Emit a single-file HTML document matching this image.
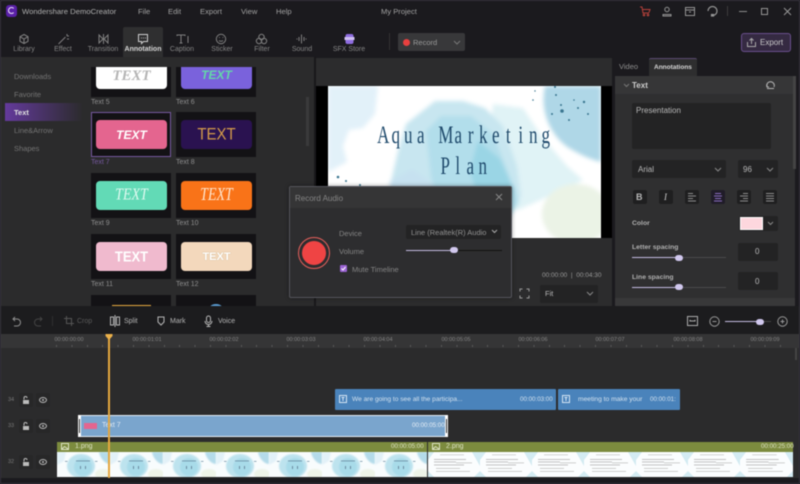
<!DOCTYPE html>
<html><head><meta charset="utf-8">
<style>
*{box-sizing:border-box;margin:0;padding:0}
html,body{width:800px;height:484px;overflow:hidden;background:#1b1a1e}
body{font-family:"Liberation Sans",sans-serif;position:relative}
#r{position:absolute;left:0;top:0;width:800px;height:484px;filter:blur(.45px);overflow:hidden}
.a,.t,svg.i{position:absolute}
.t{white-space:nowrap;line-height:12px;height:12px}
.m{font-size:7.6px;color:#a2a2a2}
.tb{font-size:7px;color:#858585}
.tb{transform:translateX(-50%)}
.card{position:absolute;width:80px;height:45px;background:#131215}
.in{position:absolute;left:5px;top:8px;width:71px;height:29px;border-radius:4px}
.tx{position:absolute;left:0;right:0;top:50%;height:20px;margin-top:-10px;line-height:20px;text-align:center;font-size:19px}
.lb{font-size:7px;color:#8e8e8e}
.sl{font-size:7.5px;color:#747474}
.ru{font-size:5.5px;color:#858585;transform:translateX(-50%)}
.fb{background:#232324;border-radius:2px}
.sm{position:absolute;width:14px;height:14px;background:#1f1f20;border-radius:2px;top:190px}
.track{position:absolute;width:14px;height:14px;background:#272728;border-radius:2px}
.thumb{position:absolute;top:452px;height:25px;overflow:hidden;background:#fff}
</style></head><body><div id="r">

<svg width="0" height="0" style="position:absolute"><defs>
<filter id="b1" x="-10%" y="-10%" width="120%" height="120%"><feGaussianBlur stdDeviation="2.200"/></filter>
<filter id="b2" x="-20%" y="-20%" width="140%" height="140%"><feGaussianBlur stdDeviation=".8"/></filter>
<symbol id="s1" viewBox="0 0 53 25" preserveAspectRatio="none">
<rect width="53" height="25" fill="#f8fcfd"/>
<g filter="url(#b2)">
<path d="M0 0h9L7 9 0 13z" fill="#e2f1f8"/>
<ellipse cx="24" cy="14" rx="14" ry="12" fill="#bde3ee"/><ellipse cx="26" cy="15" rx="9" ry="9" fill="#a8dbe9"/>
<path d="M42 0h11v12c-5 0-10-6-11-12z" fill="#b4dbea"/><ellipse cx="46" cy="22" rx="8" ry="5" fill="#eef4e8"/>
</g>
<g fill="#6a8aa0"><rect x="8" y="9" width="2.500" height=".7"/><rect x="19" y="8.500" width="14" height=".8"/><rect x="23" y="14" width="1" height="3"/><rect x="28" y="14" width="1" height="3"/><rect x="38" y="9" width="2.500" height=".7"/></g>
</symbol>
<symbol id="s2" viewBox="0 0 52 25" preserveAspectRatio="none">
<rect width="52" height="25" fill="#fbfdfe"/>
<path d="M44 0h8v14zM0 0h6L0 8zM0 25h6l-6-6zM52 25h-6l6-6z" fill="#d3ebf2"/>
<g fill="#bcbcbc"><rect x="6" y="7" width="32" height=".9"/><rect x="6" y="9.500" width="22" height=".9"/><rect x="28" y="10.500" width="16" height=".7"/><rect x="6" y="12.500" width="30" height=".9"/><rect x="8" y="16" width="24" height=".7"/><rect x="12" y="2.500" width="24" height=".6"/><rect x="8" y="19" width="34" height=".7"/></g>
</symbol>
</defs></svg>

<!-- title -->
<div class="a" style="left:0;top:0;width:800px;height:1px;background:#37343e"></div>
<div class="a" style="left:6px;top:5px;width:11px;height:12px;border-radius:3px;background:#5a20a8"></div>
<div class="a" style="left:8px;top:7px;width:7px;height:7px;border-radius:50%;border:1.500px solid #f0e8fb;border-right-color:transparent"></div>
<div class="t" style="left:22px;top:6px;font-size:7.700px;color:#aeaeae">Wondershare DemoCreator</div>
<div class="t m" style="left:138px;top:6px">File</div>
<div class="t m" style="left:168px;top:6px">Edit</div>
<div class="t m" style="left:200px;top:6px">Export</div>
<div class="t m" style="left:241px;top:6px">View</div>
<div class="t m" style="left:276px;top:6px">Help</div>
<div class="t m" style="left:381px;top:6px">My Project</div>
<svg class="i" style="left:639px;top:6px" width="12" height="11" fill="none" stroke="#b8423b" stroke-width="1"><path d="M1 1h2l1 6h6M4 3.500h7l-1 3"/><circle cx="5" cy="9" r=".8"/><circle cx="9" cy="9" r=".8"/></svg>
<svg class="i" style="left:661px;top:6px" width="12" height="11" fill="none" stroke="#969696" stroke-width="1"><circle cx="6" cy="3.500" r="2.200"/><path d="M2 10V8.500h8V10z"/></svg>
<svg class="i" style="left:684px;top:6px" width="12" height="11" fill="none" stroke="#969696" stroke-width="1"><rect x="1.500" y="1.500" width="9" height="8"/><path d="M1.500 4h9M5 6h2"/></svg>
<svg class="i" style="left:706px;top:5px" width="13" height="12" fill="none" stroke="#969696" stroke-width="1.200"><path d="M2 6a4.500 4.500 0 0 1 9 0M11 6a4.500 4.500 0 0 1-4 4.500"/><rect x="5.500" y="9.500" width="2" height="1.500" fill="#969696"/></svg>
<div class="a" style="left:727px;top:6px;width:1px;height:10px;background:#3d3d3d"></div>
<div class="a" style="left:739px;top:11px;width:8px;height:1px;background:#8c8c8c"></div>
<div class="a" style="left:761px;top:8px;width:7px;height:7px;border:1px solid #969696"></div>
<svg class="i" style="left:783px;top:7px" width="9" height="9" stroke="#969696"><path d="M1 1l7 7M8 1l-7 7"/></svg>

<!-- toolbar -->
<div class="a" style="left:123px;top:27px;width:40px;height:31px;background:#2f2f30;border-radius:2px 2px 0 0"></div>
<svg class="i" style="left:18px;top:33px" width="12" height="12" fill="none" stroke="#808080"><path d="M6 1.500l4 2.200v4.600l-4 2.200-4-2.200V3.700zM2 3.700l4 2.300 4-2.300M6 6v4.500"/></svg>
<svg class="i" style="left:57px;top:33px" width="13" height="12" fill="none" stroke="#808080"><path d="M1.500 11l7-7M10 1v2M12 3h-2M10 6h2"/></svg>
<svg class="i" style="left:97px;top:33px" width="12" height="12" fill="none" stroke="#808080"><path d="M2 2v8l4-4zM11 2v8L7 6zM6.500 1v10"/></svg>
<svg class="i" style="left:137px;top:33px" width="12" height="12" fill="none" stroke="#cfcfcf"><path d="M1.500 1.500h9v7h-4l-2 2v-2h-3z"/><path d="M4 5h.8M6 5h.8M8 5h.8"/></svg>
<svg class="i" style="left:176px;top:33px" width="14" height="12" fill="none" stroke="#808080"><path d="M1 3V2h8v1M5 2v8M3.500 10h3M12 3v7"/></svg>
<svg class="i" style="left:215px;top:33px" width="12" height="12" fill="none" stroke="#808080"><circle cx="6" cy="6" r="4.700"/><path d="M4 7.500c1 1 3 1 4 0M4 4.500h.8M7.500 4.500h.8"/></svg>
<svg class="i" style="left:255px;top:33px" width="13" height="12" fill="none" stroke="#808080"><circle cx="6.500" cy="4" r="2.700"/><circle cx="4" cy="8" r="2.700"/><circle cx="9" cy="8" r="2.700"/></svg>
<svg class="i" style="left:295px;top:33px" width="13" height="12" fill="none" stroke="#808080"><path d="M6.500 1.500v9M4 4v4M9 4v4M1.500 6h1M10.500 6h1"/></svg>
<svg class="i" style="left:344px;top:33px" width="11" height="12"><rect x="1.500" y="1" width="8" height="10" rx="2" fill="#8f6de0"/><rect x=".5" y="4" width="10" height="3" fill="#cfc0f2"/></svg>
<div class="t tb" style="left:24px;top:44px">Library</div>
<div class="t tb" style="left:63px;top:44px">Effect</div>
<div class="t tb" style="left:103px;top:44px">Transition</div>
<div class="t tb" style="left:143px;top:44px;color:#d6d6d6;font-weight:bold">Annotation</div>
<div class="t tb" style="left:182px;top:44px">Caption</div>
<div class="t tb" style="left:222px;top:44px">Sticker</div>
<div class="t tb" style="left:262px;top:44px">Filter</div>
<div class="t tb" style="left:302px;top:44px">Sound</div>
<div class="t tb" style="left:349px;top:44px">SFX Store</div>
<div class="a" style="left:389px;top:33px;width:1px;height:17px;background:#333"></div>
<div class="a" style="left:398px;top:33px;width:67px;height:18px;background:#38383a;border-radius:2px"></div>
<div class="a" style="left:403px;top:39px;width:7px;height:7px;border-radius:50%;background:#e8403f"></div>
<div class="t" style="left:413px;top:37px;font-size:7.500px;color:#9a9a9a">Record</div>
<svg class="i" style="left:453px;top:40px" width="8" height="5" fill="none" stroke="#777"><path d="M1 1l3 3 3-3"/></svg>
<div class="a" style="left:741px;top:33px;width:50px;height:19px;background:#352a42;border:1px solid #6a4f8c;border-radius:3px"></div>
<svg class="i" style="left:746px;top:37px" width="11" height="11" fill="none" stroke="#a9a9a9"><path d="M1.500 5v4.500h8V5M5.500 7V1.500M3.500 3.500l2-2 2 2"/></svg>
<div class="t" style="left:760px;top:37px;font-size:8px;color:#c9c9c9">Export</div>

<!-- left panel -->
<div class="a" style="left:0;top:57px;width:314px;height:249px;background:#2b2b2c"></div>
<div class="t sl" style="left:14px;top:71px">Downloads</div>
<div class="t sl" style="left:14px;top:89px">Favorite</div>
<div class="a" style="left:5px;top:103px;width:78px;height:18px;background:linear-gradient(90deg,#643a9c,#2b2b2c)"></div>
<div class="t sl" style="left:14px;top:107px;color:#e2e2e2;font-weight:bold">Text</div>
<div class="t sl" style="left:14px;top:125px">Line&amp;Arrow</div>
<div class="t sl" style="left:14px;top:143px">Shapes</div>
<div class="a" style="left:306px;top:97px;width:3px;height:49px;background:#3a3a3b"></div>

<!-- cards -->
<div class="a" style="left:0;top:67px;width:314px;height:239px;overflow:hidden">
<div class="card" style="left:91px;top:-15px"><div class="in" style="background:#fff"><div class="tx" style="color:#b5b5b5;font-style:italic;font-weight:bold;font-family:'Liberation Serif',serif;font-size:15px;margin-top:-9px">TEXT</div></div></div>
<div class="card" style="left:176px;top:-15px"><div class="in" style="background:#7a62dc"><div class="tx" style="color:#63d7a8;font-style:italic;font-weight:bold;font-size:12px;margin-top:-10px">TEXT</div></div></div>
<div class="card" style="left:91px;top:45px;border:1px solid #75589f"><div class="in" style="left:4px;top:7px;background:#e4658f"><div class="tx" style="color:#fff;font-style:italic;font-weight:bold;font-size:12px">TEXT</div></div></div>
<div class="card" style="left:176px;top:45px"><div class="in" style="background:#2a1250"><div class="tx" style="color:#d49b4a;font-size:15px;transform:scaleY(1.100)">TEXT</div></div></div>
<div class="card" style="left:91px;top:106px"><div class="in" style="background:#62dab6"><div class="tx" style="color:#dff9f0;font-style:italic;font-family:'Liberation Serif',serif;font-size:14px;transform:scaleY(1.200)">TEXT</div></div></div>
<div class="card" style="left:176px;top:106px"><div class="in" style="background:#f97318"><div class="tx" style="color:#ffe6cf;font-style:italic;font-family:'Liberation Serif',serif;font-size:14px;transform:scaleY(1.300)">TEXT</div></div></div>
<div class="card" style="left:91px;top:167px"><div class="in" style="background:#f0bace"><div class="tx" style="color:#fff;font-weight:bold;font-size:13px;transform:scaleY(1.100)">TEXT</div></div></div>
<div class="card" style="left:176px;top:167px"><div class="in" style="background:#f3d8bc"><div class="tx" style="color:#fff;font-weight:bold;font-size:11px;text-shadow:0 0 1px #b9a070">TEXT</div></div></div>
<div class="card" style="left:91px;top:228px"><div class="a" style="left:21px;top:10px;width:39px;height:4px;background:#e7a93f"></div></div>
<div class="card" style="left:176px;top:228px"><div class="a" style="left:31px;top:9px;width:18px;height:18px;border-radius:50%;background:#5a9bd0"></div></div>
</div>
<div class="t lb" style="left:91px;top:97px">Text 5</div>
<div class="t lb" style="left:176px;top:97px">Text 6</div>
<div class="t lb" style="left:91px;top:157px;color:#75589f">Text 7</div>
<div class="t lb" style="left:176px;top:157px">Text 8</div>
<div class="t lb" style="left:91px;top:218px">Text 9</div>
<div class="t lb" style="left:176px;top:218px">Text 10</div>
<div class="t lb" style="left:91px;top:279px">Text 11</div>
<div class="t lb" style="left:176px;top:279px">Text 12</div>

<!-- preview -->
<div class="a" style="left:314px;top:57px;width:2px;height:249px;background:#19181b"></div>
<div class="a" style="left:316px;top:58px;width:296px;height:248px;background:#2c2c2d"></div>
<div class="a" style="left:316px;top:86px;width:296px;height:152px;background:#000"></div>
<svg class="i" style="left:328px;top:86px" width="273" height="152" viewBox="0 0 273 152">
<rect width="273" height="152" fill="#fff"/>
<g filter="url(#b1)">
<path d="M0 0h50l-3 28-12 14-14 2-6 16 4 16-19 10z" fill="#e2f1f9"/>
<path d="M165 18l30 4 20 30 24 28 16 14-20 10-45 20-35-8z" fill="#e0f3f6"/>
<path d="M78 38l29-23 28 0 22 7 18 18 14 40 4 30-20 30H105L70 140 62 100l8-35z" fill="#c8e6f0"/>
<path d="M98 45l15-15 30 0 22 18 14 36 12 32-16 26-30 10-30-20-12-40z" fill="#b2deeb"/>
<path d="M150 55l22 18 14 30-8 30-24-8-12-40z" fill="#9ad5e5"/>
<path d="M62 95l22-12 20 14 12 30-8 25H60z" fill="#c6e1f0"/>
<ellipse cx="248" cy="128" rx="34" ry="30" fill="#ebf3e6"/>
<path d="M217 0h56v76c-12-3-22-8-32-14-16-10-30-34-24-62z" fill="#afd7e7"/>
</g>
<g fill="#3a7690"><circle cx="233" cy="19" r="1"/><circle cx="234" cy="25" r="1.800"/><circle cx="228" cy="9" r="1"/><circle cx="250" cy="22" r="1"/><circle cx="256" cy="16" r="1.200"/><circle cx="260" cy="28" r="1"/><circle cx="241" cy="34" r="1"/><circle cx="224" cy="28" r="1"/><circle cx="246" cy="14" r=".8"/><circle cx="205" cy="14" r=".8"/><circle cx="207" cy="5" r=".7"/><circle cx="227" cy="1" r="1"/><circle cx="10" cy="91" r="1.300"/><circle cx="18" cy="95" r="1"/><circle cx="32" cy="99" r="1"/></g>
<g transform="scale(.68 1)" font-family="Liberation Serif,serif" font-size="25" fill="#1f4a6c" text-anchor="middle">
<text y="57" x="81.25 99.63 118.01 136.40 154.78 173.16 191.54 209.93 228.31 246.69 265.07 283.46 301.84 320.22">Aqua Marketing</text>
<text y="88" x="172.43 190.81 209.19 227.57">Plan</text>
</g>
</svg>
<div class="t" style="left:542px;top:270px;font-size:6.500px;color:#999">00:00:00 &nbsp;|&nbsp; 00:04:30</div>
<svg class="i" style="left:519px;top:288px" width="11" height="11" fill="none" stroke="#9a9a9a"><path d="M1 3.500V1h2.500M7.500 1H10v2.500M10 7.500V10H7.500M3.500 10H1V7.500"/></svg>
<div class="a fb" style="left:540px;top:285px;width:58px;height:18px"></div>
<div class="t" style="left:545px;top:288px;font-size:7.500px;color:#b5b5b5">Fit</div>
<svg class="i" style="left:586px;top:291px" width="8" height="5" fill="none" stroke="#888"><path d="M1 1l3 3 3-3"/></svg>

<!-- right panel -->
<div class="t" style="left:619px;top:61px;font-size:7.500px;color:#8f8f8f">Video</div>
<div class="a" style="left:649px;top:58px;width:48px;height:18px;background:#2e2e2f;border-top:1px solid #5a4a72;border-radius:2px 2px 0 0"></div>
<div class="t" style="left:654px;top:62px;font-size:6.500px;color:#d8d8d8;font-weight:bold">Annotations</div>
<div class="a" style="left:615px;top:76px;width:180px;height:230px;background:#2f2f30"></div>
<div class="a" style="left:615px;top:76px;width:180px;height:18px;background:#363637"></div>
<div class="a" style="left:793px;top:76px;width:3px;height:93px;background:#444"></div>
<svg class="i" style="left:623px;top:83px" width="7" height="5" fill="none" stroke="#777"><path d="M1 1l2.500 2.500L6 1"/></svg>
<div class="t" style="left:632px;top:80px;font-size:8px;font-weight:bold;color:#cfcfcf">Text</div>
<svg class="i" style="left:765px;top:80px" width="11" height="10" fill="none" stroke="#b5b5b5"><path d="M2 7a3.800 3.800 0 1 1 7 0M2 8.500h7M2 4v3h2"/></svg>
<div class="a fb" style="left:632px;top:103px;width:139px;height:46px"></div>
<div class="t" style="left:636px;top:105px;font-size:8px;color:#b8b8b8">Presentation</div>
<div class="a fb" style="left:632px;top:160px;width:94px;height:18px"></div>
<div class="t" style="left:638px;top:164px;font-size:8px;color:#b8b8b8">Arial</div>
<svg class="i" style="left:714px;top:167px" width="8" height="5" fill="none" stroke="#888"><path d="M1 1l3 3 3-3"/></svg>
<div class="a fb" style="left:738px;top:160px;width:40px;height:18px"></div>
<div class="t" style="left:743px;top:164px;font-size:8px;color:#b8b8b8">96</div>
<svg class="i" style="left:766px;top:167px" width="8" height="5" fill="none" stroke="#888"><path d="M1 1l3 3 3-3"/></svg>
<div class="sm" style="left:633px"></div>
<div class="t" style="left:636px;top:191px;font-size:9px;font-weight:bold;color:#b8b8b8">B</div>
<div class="sm" style="left:659px"></div>
<div class="t" style="left:664px;top:191px;font-size:9px;font-style:italic;font-family:'Liberation Serif',serif;color:#c8c8c8">I</div>
<div class="sm" style="left:685px"></div>
<svg class="i" style="left:685px;top:190px" width="14" height="14" stroke="#8c8c8c"><path d="M3 3.500h5M3 6h8M3 8.500h5M3 11h8"/></svg>
<div class="sm" style="left:711px;background:#201c28"></div>
<svg class="i" style="left:711px;top:190px" width="14" height="14" stroke="#8a6cc0"><path d="M4 3.500h6M3 6h8M4 8.500h6M3 11h8"/></svg>
<div class="sm" style="left:737px"></div>
<svg class="i" style="left:737px;top:190px" width="14" height="14" stroke="#8c8c8c"><path d="M6 3.500h5M3 6h8M6 8.500h5M3 11h8"/></svg>
<div class="sm" style="left:763px"></div>
<svg class="i" style="left:763px;top:190px" width="14" height="14" stroke="#8c8c8c"><path d="M3 3.500h8M3 6h8M3 8.500h8M3 11h8"/></svg>
<div class="t" style="left:632px;top:218px;font-size:6.800px;font-weight:bold;color:#b0b0b0">Color</div>
<div class="a fb" style="left:739px;top:216px;width:39px;height:15px"></div>
<div class="a" style="left:740px;top:217px;width:23px;height:13px;background:#fdd7de;border:1px solid #fff"></div>
<svg class="i" style="left:767px;top:221px" width="7" height="5" fill="none" stroke="#888"><path d="M1 1l2.500 2.500L6 1"/></svg>
<div class="t" style="left:632px;top:242px;font-size:6.800px;font-weight:bold;color:#b0b0b0">Letter spacing</div>
<div class="a" style="left:632px;top:257px;width:94px;height:1px;background:#4a4a4b"></div>
<div class="a" style="left:632px;top:257px;width:46px;height:1px;background:#c4bbe2"></div>
<div class="a" style="left:675px;top:255px;width:8px;height:6px;border-radius:3px;background:#d1c8ee"></div>
<div class="a fb" style="left:738px;top:243px;width:40px;height:18px"></div>
<div class="t" style="left:755px;top:246px;font-size:8px;color:#b8b8b8">0</div>
<div class="t" style="left:632px;top:272px;font-size:6.800px;font-weight:bold;color:#b0b0b0">Line spacing</div>
<div class="a" style="left:632px;top:287px;width:94px;height:1px;background:#4a4a4b"></div>
<div class="a" style="left:632px;top:287px;width:46px;height:1px;background:#c4bbe2"></div>
<div class="a" style="left:675px;top:284px;width:8px;height:6px;border-radius:3px;background:#d1c8ee"></div>
<div class="a fb" style="left:738px;top:272px;width:40px;height:18px"></div>
<div class="t" style="left:755px;top:276px;font-size:8px;color:#b8b8b8">0</div>
<div class="a" style="left:615px;top:298px;width:180px;height:8px;background:#383839;overflow:hidden"><div class="t" style="left:17px;top:6px;font-size:8px;font-weight:bold;color:#cfcfcf">Text Preset</div></div>

<!-- dialog -->
<div class="a" style="left:289px;top:186px;width:223px;height:112px;background:#2d2d2f;border:1px solid #55555c;border-radius:2px;box-shadow:0 0 4px #0006"></div>
<div class="a" style="left:290px;top:187px;width:221px;height:21px;background:#353536"></div>
<div class="t" style="left:295px;top:193px;font-size:8px;color:#858585">Record Audio</div>
<svg class="i" style="left:495px;top:193px" width="9" height="9" stroke="#888"><path d="M1 1l6 6M7 1l-6 6"/></svg>
<div class="a" style="left:298px;top:237px;width:32px;height:32px;border-radius:50%;border:1px solid #e8605c;background:#2d2d2f"></div>
<div class="a" style="left:302px;top:241px;width:24px;height:24px;border-radius:50%;background:#ef4444"></div>
<div class="t" style="left:339px;top:228px;font-size:7.500px;color:#858585">Device</div>
<div class="t" style="left:339px;top:246px;font-size:7.500px;color:#858585">Volume</div>
<div class="a fb" style="left:406px;top:225px;width:95px;height:14px"></div>
<div class="t" style="left:411px;top:227px;font-size:7.500px;color:#929292">Line (Realtek(R) Audio</div>
<svg class="i" style="left:491px;top:229px" width="7" height="5" fill="none" stroke="#aaa"><path d="M1 1l2.500 2.500L6 1"/></svg>
<div class="a" style="left:406px;top:250px;width:96px;height:1px;background:#111"></div>
<div class="a" style="left:406px;top:250px;width:47px;height:1px;background:#c4bbe2"></div>
<div class="a" style="left:450px;top:247px;width:8px;height:6px;border-radius:3px;background:#d1c8ee"></div>
<div class="a" style="left:340px;top:265px;width:7px;height:7px;background:#9b63d4;border-radius:1px"></div>
<svg class="i" style="left:340px;top:265px" width="7" height="7" fill="none" stroke="#fff"><path d="M1.500 3.500l1.500 1.500 2.500-3"/></svg>
<div class="t" style="left:352px;top:264px;font-size:7.500px;color:#858585">Mute Timeline</div>

<!-- timeline toolbar -->
<div class="a" style="left:0;top:306px;width:800px;height:28px;background:#1c1c1e"></div>
<svg class="i" style="left:12px;top:316px" width="10" height="11" fill="none" stroke="#8f8f8f"><path d="M3 1L1 3l2 2M1 3h4a3 3 0 0 1 0 7H2"/></svg>
<svg class="i" style="left:33px;top:316px" width="10" height="11" fill="none" stroke="#444"><path d="M7 1l2 2-2 2M9 3H5a3 3 0 0 0 0 7h3"/></svg>
<div class="a" style="left:52px;top:316px;width:1px;height:10px;background:#2f2f2f"></div>
<svg class="i" style="left:64px;top:316px" width="10" height="10" fill="none" stroke="#555"><path d="M2.500 0v7.500H10M0 2.500h7.500V10"/></svg>
<div class="t" style="left:77px;top:316px;font-size:7px;color:#5a5a5a">Crop</div>
<svg class="i" style="left:110px;top:315px" width="10" height="12" fill="none" stroke="#b5b5b5"><rect x=".5" y="2" width="3" height="8"/><rect x="6.500" y="2" width="3" height="8"/><path d="M5 0v12"/></svg>
<div class="t" style="left:124px;top:316px;font-size:7px;color:#b5b5b5">Split</div>
<svg class="i" style="left:157px;top:316px" width="8" height="10" fill="none" stroke="#b5b5b5"><path d="M1 1h6v5L4 9 1 6z"/></svg>
<div class="t" style="left:170px;top:316px;font-size:7px;color:#b5b5b5">Mark</div>
<svg class="i" style="left:204px;top:315px" width="9" height="12" fill="none" stroke="#b5b5b5"><rect x="2.500" y="1" width="4" height="6.500" rx="2"/><path d="M1 6a3.500 3.500 0 0 0 7 0M4.500 9.500V11M2.500 11.500h4"/></svg>
<div class="t" style="left:218px;top:316px;font-size:7px;color:#b5b5b5">Voice</div>
<svg class="i" style="left:687px;top:316px" width="11" height="10" fill="none" stroke="#aaa"><rect x=".5" y=".5" width="10" height="9"/><path d="M2.500 5h6M2.500 5l1-1M8.500 5l-1-1"/></svg>
<svg class="i" style="left:709px;top:316px" width="11" height="11" fill="none" stroke="#999"><circle cx="5.500" cy="5.500" r="4.700"/><path d="M3.500 5.500h4"/></svg>
<div class="a" style="left:725px;top:321px;width:32px;height:1px;background:#c4bbe2"></div>
<div class="a" style="left:757px;top:321px;width:14px;height:1px;background:#444"></div>
<div class="a" style="left:756px;top:319px;width:8px;height:6px;border-radius:3px;background:#d1c8ee"></div>
<svg class="i" style="left:777px;top:316px" width="11" height="11" fill="none" stroke="#999"><circle cx="5.500" cy="5.500" r="4.700"/><path d="M3.500 5.500h4M5.500 3.500v4"/></svg>

<!-- ruler -->
<div class="a" style="left:0;top:334px;width:800px;height:14px;background:#353536"></div>
<div class="a" style="left:0;top:348px;width:800px;height:130px;background:#2b2b2c"></div>
<div class="a" style="left:56px;top:345px;width:730px;height:2px;background:repeating-linear-gradient(90deg,#5a5a5a 0 1px,transparent 1px 15.400px)"></div>
<div class="t ru" style="left:69px;top:334px">00:00:00:00</div>
<div class="t ru" style="left:147px;top:334px">00:00:01:01</div>
<div class="t ru" style="left:224px;top:334px">00:00:02:02</div>
<div class="t ru" style="left:301px;top:334px">00:00:03:03</div>
<div class="t ru" style="left:378px;top:334px">00:00:04:04</div>
<div class="t ru" style="left:456px;top:334px">00:00:05:05</div>
<div class="t ru" style="left:533px;top:334px">00:00:06:06</div>
<div class="t ru" style="left:610px;top:334px">00:00:07:07</div>
<div class="t ru" style="left:688px;top:334px">00:00:08:08</div>
<div class="t ru" style="left:765px;top:334px">00:00:09:09</div>
<div class="a" style="left:795px;top:348px;width:2px;height:12px;background:#444"></div>

<!-- tracks head -->
<div class="t" style="left:8px;top:394px;font-size:5.500px;color:#7a7a7a">34</div>
<div class="t" style="left:8px;top:420px;font-size:5.500px;color:#7a7a7a">33</div>
<div class="t" style="left:8px;top:456px;font-size:5.500px;color:#7a7a7a">32</div>
<div class="track" style="left:19px;top:393px"></div><div class="track" style="left:36px;top:393px"></div>
<div class="track" style="left:19px;top:419px"></div><div class="track" style="left:36px;top:419px"></div>
<div class="track" style="left:19px;top:455px"></div><div class="track" style="left:36px;top:455px"></div>
<svg class="i" style="left:19px;top:393px" width="32" height="14" fill="none"><path d="M5 6.500V5a1.500 1.500 0 0 1 3 0" stroke="#bbb"/><rect x="4" y="7" width="6" height="4" fill="#bbb"/><ellipse cx="24" cy="7" rx="3.500" ry="2.500" stroke="#bbb"/><circle cx="24" cy="7" r="1" fill="#bbb"/></svg>
<svg class="i" style="left:19px;top:419px" width="32" height="14" fill="none"><path d="M5 6.500V5a1.500 1.500 0 0 1 3 0" stroke="#bbb"/><rect x="4" y="7" width="6" height="4" fill="#bbb"/><ellipse cx="24" cy="7" rx="3.500" ry="2.500" stroke="#bbb"/><circle cx="24" cy="7" r="1" fill="#bbb"/></svg>
<svg class="i" style="left:19px;top:455px" width="32" height="14" fill="none"><path d="M5 6.500V5a1.500 1.500 0 0 1 3 0" stroke="#bbb"/><rect x="4" y="7" width="6" height="4" fill="#bbb"/><ellipse cx="24" cy="7" rx="3.500" ry="2.500" stroke="#bbb"/><circle cx="24" cy="7" r="1" fill="#bbb"/></svg>

<!-- clips -->
<div class="a" style="left:335px;top:389px;width:221px;height:21px;background:#4a83bb;border-radius:1px"></div>
<svg class="i" style="left:339px;top:395px" width="8" height="8" fill="none" stroke="#d5e5f3"><rect x=".5" y=".5" width="7" height="7"/><path d="M2.500 2.500h3M4 2.500v3.500"/></svg>
<div class="t" style="left:352px;top:394px;font-size:6.600px;color:#d2e1ee">We are going to see all the participa...</div>
<div class="t" style="left:520px;top:394px;font-size:6.200px;color:#d2e1ee">00:00:03:00</div>
<div class="a" style="left:558px;top:389px;width:122px;height:21px;background:#4a83bb;border-radius:1px"></div>
<svg class="i" style="left:562px;top:395px" width="8" height="8" fill="none" stroke="#d5e5f3"><rect x=".5" y=".5" width="7" height="7"/><path d="M2.500 2.500h3M4 2.500v3.500"/></svg>
<div class="t" style="left:578px;top:394px;font-size:6.700px;color:#d2e1ee">meeting to make your</div>
<div class="t" style="left:650px;top:394px;font-size:6.200px;color:#d2e1ee">00:00:01:</div>
<div class="a" style="left:78px;top:415px;width:370px;height:22px;background:#7aa5cd;border-top:1px solid #e6eef6;border-bottom:1px solid #e6eef6"></div>
<div class="a" style="left:78px;top:415px;width:3px;height:22px;background:#fff"></div>
<div class="a" style="left:79px;top:419px;width:1px;height:14px;background:#333"></div>
<div class="a" style="left:445px;top:415px;width:3px;height:22px;background:#fff"></div>
<div class="a" style="left:446px;top:419px;width:1px;height:14px;background:#333"></div>
<div class="a" style="left:84px;top:423px;width:13px;height:6px;background:#e4658f"></div>
<div class="t" style="left:102px;top:420px;font-size:7px;color:#dfe9f3">Text 7</div>
<div class="t" style="left:412px;top:420px;font-size:6.200px;color:#e6eef6">00:00:05:00</div>

<div class="a" style="left:57px;top:442px;width:370px;height:10px;background:#7c8b3e"></div>
<svg class="i" style="left:61px;top:443px" width="8" height="8" fill="none" stroke="#dde3c4"><rect x=".5" y=".5" width="7" height="6"/><path d="M1 6l2.500-2.500L7 6"/></svg>
<div class="t" style="left:75px;top:441px;font-size:7px;color:#dde3c4">1.png</div>
<div class="t" style="left:391px;top:441px;font-size:6.200px;color:#dde3c4">00:00:05:00</div>
<div class="a" style="left:428px;top:442px;width:365px;height:10px;background:#7c8b3e"></div>
<svg class="i" style="left:432px;top:443px" width="8" height="8" fill="none" stroke="#dde3c4"><rect x=".5" y=".5" width="7" height="6"/><path d="M1 6l2.500-2.500L7 6"/></svg>
<div class="t" style="left:446px;top:441px;font-size:7px;color:#dde3c4">2.png</div>
<div class="t" style="left:761px;top:441px;font-size:6.200px;color:#dde3c4">00:00:25:00</div>

<div class="thumb" style="left:57px;width:370px">
<svg class="a" style="left:0;top:0" width="53" height="25"><use href="#s1"/></svg>
<svg class="a" style="left:53px;top:0" width="53" height="25"><use href="#s1"/></svg>
<svg class="a" style="left:106px;top:0" width="53" height="25"><use href="#s1"/></svg>
<svg class="a" style="left:159px;top:0" width="53" height="25"><use href="#s1"/></svg>
<svg class="a" style="left:212px;top:0" width="53" height="25"><use href="#s1"/></svg>
<svg class="a" style="left:265px;top:0" width="53" height="25"><use href="#s1"/></svg>
<svg class="a" style="left:318px;top:0" width="53" height="25"><use href="#s1"/></svg>
</div>
<div class="thumb" style="left:428px;width:365px">
<svg class="a" style="left:0;top:0" width="52" height="25"><use href="#s2"/></svg>
<svg class="a" style="left:52px;top:0" width="52" height="25"><use href="#s2"/></svg>
<svg class="a" style="left:104px;top:0" width="52" height="25"><use href="#s2"/></svg>
<svg class="a" style="left:156px;top:0" width="52" height="25"><use href="#s2"/></svg>
<svg class="a" style="left:208px;top:0" width="52" height="25"><use href="#s2"/></svg>
<svg class="a" style="left:260px;top:0" width="52" height="25"><use href="#s2"/></svg>
<svg class="a" style="left:312px;top:0" width="53" height="25"><use href="#s2"/></svg>
</div>

<!-- playhead -->
<div class="a" style="left:108px;top:337px;width:1.500px;height:141px;background:#e5a73e"></div>
<svg class="i" style="left:105px;top:334px" width="8" height="6"><path d="M.5 0h7v2L4 6 .5 2z" fill="#eab04a"/></svg>
<div class="a" style="left:0;top:478px;width:800px;height:6px;background:#1b1a1e"></div>
<div class="a" style="left:0;top:0;width:1px;height:484px;background:#37343e"></div>
<div class="a" style="left:799px;top:0;width:1px;height:484px;background:#37343e"></div>
<div class="a" style="left:0;top:483px;width:800px;height:1px;background:#37343e"></div>
</div></body></html>
